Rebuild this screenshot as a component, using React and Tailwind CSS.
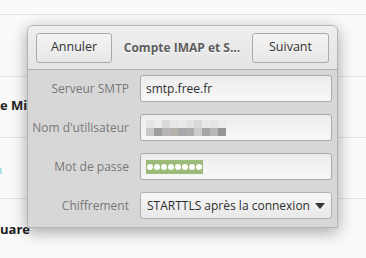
import React from 'react';

const blurTop = ['#e4e4e4', '#ececec', '#dadada', '#e6e6e6', '#e9e9e9', '#e2e2e2', '#d8d8d8', '#e8e8e8', '#e4e4e4', '#ebebeb'];
const blurBottom = ['#c8c8c8', '#9d9d9d', '#b5b5b5', '#b3b1aa', '#a8a8a8', '#acacac', '#cbcbcb', '#a5a5a5', '#b7b7b7', '#969696'];

const Field = ({ label, children }) => (
  <div className="flex items-center gap-[11px]">
    <div className="w-[101px] text-right text-[12px] whitespace-nowrap text-[#777777]">{label}</div>
    {children}
  </div>
);

const inputCls =
  'flex-1 h-[27px] rounded-[3px] border border-[#a9a9a9] bg-gradient-to-b from-[#ececec] to-[#f8f8f8] flex items-center px-[5px] text-[12px] text-[#2e2e2e] whitespace-nowrap';

const App = () => {
  return (
    <div className="relative w-[366px] h-[258px] overflow-hidden bg-[#fafafa] font-['Open_Sans',sans-serif]">
      {/* background list */}
      <div className="flex flex-col pt-[14px]">
        <div className="h-[62px] border-t border-[#e3e3e3]" />
        <div className="h-[61px] border-t border-[#e3e3e3] flex items-center text-[13px] font-bold text-[#222] pb-[2px]">
          e Mi
        </div>
        <div className="h-[61px] border-t border-[#e3e3e3] flex items-center pt-[6px]">
          <div className="w-[2px] h-[6px] bg-[#aee3e6]" />
        </div>
        <div className="h-[60px] border-t border-[#e3e3e3] flex items-center text-[13px] font-bold text-[#222] pt-[3px]">
          uare
        </div>
      </div>

      {/* dialog */}
      <div className="absolute left-[27px] top-[25px] w-[311px] h-[203px] rounded-t-[6px] border border-[#b4b4b4] bg-[#d7d7d7] shadow-[0_4px_16px_rgba(0,0,0,0.35)] flex flex-col overflow-hidden">
        <div className="h-[44px] shrink-0 flex items-center justify-between px-[8px] bg-gradient-to-b from-[#efefef] to-[#e4e4e4] border-b border-[#b0b0b0]">
          <button className="w-[76px] h-[30px] rounded-[3px] border border-[#aaaaaa] bg-gradient-to-b from-[#f4f4f4] to-[#e7e7e7] text-[12.5px] text-[#333]">
            Annuler
          </button>
          <div className="text-[12px] font-bold text-[#5d5d5d] [text-shadow:0_1px_0_#ffffff] whitespace-nowrap">Compte IMAP et S...</div>
          <button className="w-[77px] h-[30px] rounded-[3px] border border-[#aaaaaa] bg-gradient-to-b from-[#f4f4f4] to-[#e7e7e7] text-[12.5px] text-[#333]">
            Suivant
          </button>
        </div>

        <div className="flex flex-col gap-[12px] pt-[5px] pr-[5px]">
          <Field label="Serveur SMTP">
            <div className={inputCls}>smtp.free.fr</div>
          </Field>
          <Field label="Nom d'utilisateur">
            <div className={inputCls}>
              <div className="flex flex-col">
                <div className="flex">
                  {blurTop.map((c, i) => (
                    <div key={i} className="w-[8px] h-[8px]" style={{ background: c }} />
                  ))}
                </div>
                <div className="flex">
                  {blurBottom.map((c, i) => (
                    <div key={i} className="w-[8px] h-[8px]" style={{ background: c }} />
                  ))}
                </div>
              </div>
            </div>
          </Field>
          <Field label="Mot de passe">
            <div className={inputCls}>
              <div className="h-[14px] px-[1px] bg-[#9cbb79] flex items-center gap-[1px]">
                {Array.from({ length: 8 }).map((_, i) => (
                  <div key={i} className="w-[6px] h-[6px] rounded-full bg-white" />
                ))}
              </div>
            </div>
          </Field>
          <Field label="Chiffrement">
            <div className="flex-1 h-[27px] rounded-[3px] border border-[#b1b1b1] bg-gradient-to-b from-[#f6f6f6] to-[#e9e9e9] flex items-center justify-between px-[6px] text-[12px] text-[#2e2e2e] whitespace-nowrap">
              <span>STARTTLS après la connexion</span>
              <svg width="10" height="6" viewBox="0 0 10 6">
                <path d="M0 0 L10 0 L5 6 Z" fill="#333" />
              </svg>
            </div>
          </Field>
        </div>
      </div>
    </div>
  );
};

export default App;
